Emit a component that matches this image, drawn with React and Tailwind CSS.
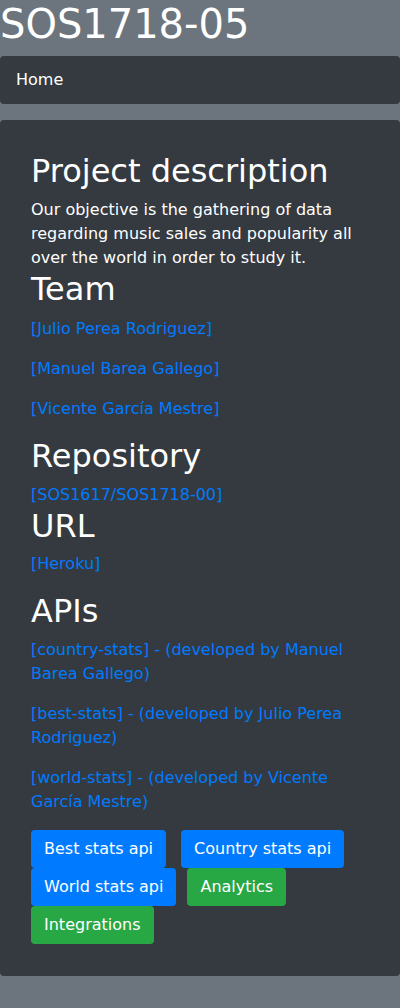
import React from 'react';

const team = ['[Julio Perea Rodriguez]', '[Manuel Barea Gallego]', '[Vicente García Mestre]'];

const apis = [
  '[country-stats] - (developed by Manuel Barea Gallego)',
  '[best-stats] - (developed by Julio Perea Rodriguez)',
  '[world-stats] - (developed by Vicente García Mestre)',
];

const H2 = ({ children, className = 'mb-2' }) => (
  <h2 className={`text-[32px] leading-[38.4px] font-normal ${className}`}>{children}</h2>
);

const Link = ({ children, className = 'mb-4' }) => (
  <p className={`text-[16px] leading-6 text-[#007bff] ${className}`}>
    <a href="#">{children}</a>
  </p>
);

const Btn = ({ children, color, className = '' }) => (
  <button
    className={`${color} rounded border border-transparent px-3 py-1.5 text-white ${className}`}
  >
    {children}
  </button>
);

export default function App() {
  return (
    <div
      className="min-h-[1008px] bg-[#6c757d] text-white"
      style={{ fontFamily: '"DejaVu Sans", sans-serif' }}
    >
      <h1 className="text-[40px] leading-[48px] font-normal mb-2">SOS1718-05</h1>

      {/* Navbar */}
      <nav className="bg-[#343a40] rounded h-12 px-4 flex items-center">
        <a href="#" className="text-[16px] leading-6 text-white">Home</a>
      </nav>

      {/* Jumbotron */}
      <div className="mt-4 bg-[#343a40] rounded px-[31px] py-8">
        <H2>Project description</H2>
        <p className="text-[16px] leading-6">
          Our objective is the gathering of data regarding music sales and popularity all over the world in order to study it.
        </p>

        <H2>Team</H2>
        {team.map((t) => (
          <Link key={t}>{t}</Link>
        ))}

        <H2>Repository</H2>
        <Link className="">[SOS1617/SOS1718-00]</Link>

        <H2 className="mb-[6px]">URL</H2>
        <Link>[Heroku]</Link>

        <H2>APIs</H2>
        {apis.map((a) => (
          <Link key={a}>{a}</Link>
        ))}

        <div className="mt-[2px] flex flex-wrap text-[16px] leading-6">
          <Btn color="bg-[#007bff]" className="mr-[15px]">Best stats api</Btn>
          <Btn color="bg-[#007bff]">Country stats api</Btn>
          <div className="w-full" />
          <Btn color="bg-[#007bff]" className="mr-[11px]">World stats api</Btn>
          <Btn color="bg-[#28a745]">Analytics</Btn>
          <div className="w-full" />
          <Btn color="bg-[#28a745]">Integrations</Btn>
        </div>
      </div>
    </div>
  );
}
